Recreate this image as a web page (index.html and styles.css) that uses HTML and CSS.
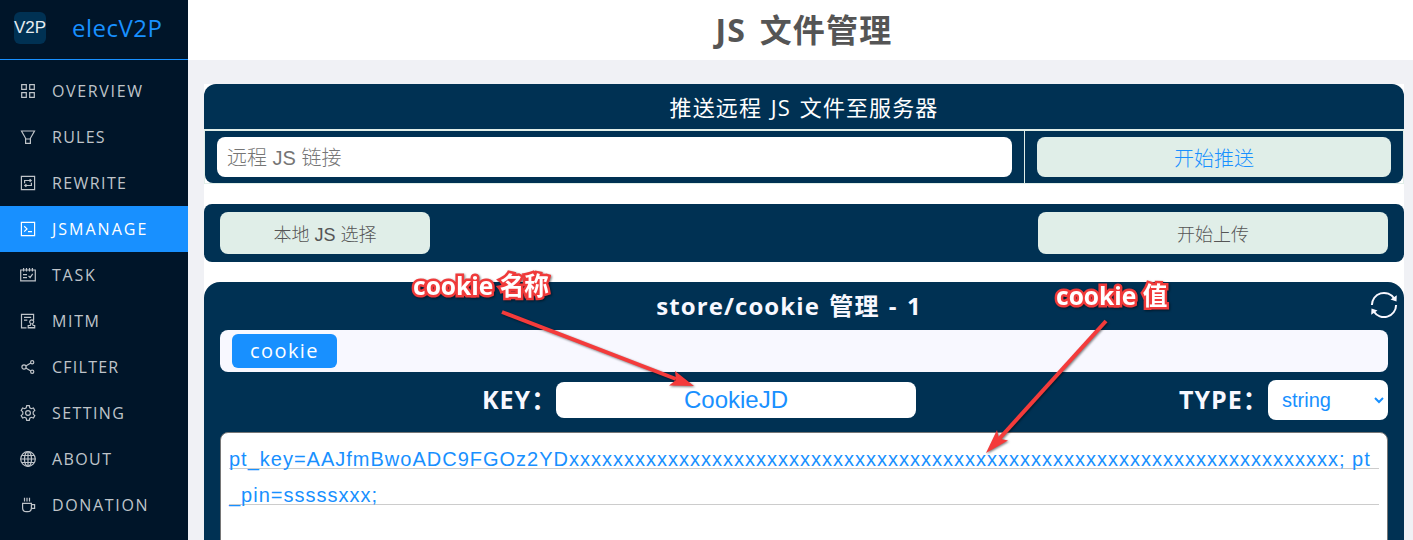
FILE: index.html
```html
<!DOCTYPE html>
<html lang="zh-CN">
<head>
<meta charset="utf-8">
<title>elecV2P</title>
<link rel="stylesheet" href="styles.css">
</head>
<body>
<div class="app">
  <aside class="sidebar">
    <div class="brand"><span class="logo"><span class="logo-text">V2P</span></span><span class="brand-name">elecV2P</span></div>
    <nav class="menu">
      <a class="item"><svg class="icon" viewBox="0 0 16 16"><path d="M1.7 1.7h4.6v4.6H1.7zM9.7 1.7h4.6v4.6H9.7zM1.7 9.7h4.6v4.6H1.7zM9.7 9.7h4.6v4.6H9.7z"/></svg><span class="t-overview">OVERVIEW</span></a>
      <a class="item"><svg class="icon" viewBox="0 0 16 16"><path d="M1.5 2h13L10.4 9.3v5H5.6v-5zM5.6 10h4.8"/></svg><span class="t-rules">RULES</span></a>
      <a class="item"><svg class="icon" viewBox="0 0 16 16"><path d="M1.4 1.4h13.2v13.2H1.4zM4.6 8.2V5.5h6.2M9.6 4.1l1.6 1.4-1.6 1.4M11.4 7.8v2.7H5.2M6.4 9.1l-1.6 1.4 1.6 1.4"/></svg><span class="t-rewrite">REWRITE</span></a>
      <a class="item active"><svg class="icon" viewBox="0 0 16 16"><path d="M1.4 1.4h13.2v13.2H1.4zM4.2 5.2 7 7.9l-2.8 2.7M8 10.6h4"/></svg><span class="t-jsmanage">JSMANAGE</span></a>
      <a class="item"><svg class="icon" viewBox="0 0 16 16"><path d="M.7 3h14.6v10.8H.7zM3.6 1v3.4M6.5 1v3.4M9.5 1v3.4M12.4 1v3.4M3 7.7h4M3 10.6h4M8.5 8.9l1.6 1.6 2.6-3.6"/></svg><span class="t-task">TASK</span></a>
      <a class="item"><svg class="icon" viewBox="0 0 16 16"><path d="M6.5 14.8h-5V1.3h12.1v6M4 4.3h7.2M4 7.2h3.3M8.2 15v-2.5h2.1l.7-1.8a2 2 0 1 1 1.4 0l.7 1.8h1.6V15zM8.2 14.7h6.5"/></svg><span class="t-mitm">MITM</span></a>
      <a class="item"><svg class="icon" viewBox="0 0 16 16"><circle cx="4" cy="8" r="2.1"/><circle cx="12.2" cy="3.2" r="1.6"/><circle cx="12.2" cy="12.8" r="1.6"/><path d="m5.8 6.9 5-2.9M5.8 9.1l5 2.9"/></svg><span class="t-cfilter">CFILTER</span></a>
      <a class="item"><svg class="icon" viewBox="0 0 16 16"><path d="m6.2 2.8.5-2.1h2.6l.5 2.1 1.5.9 2.1-.7 1.4 2.4-1.6 1.5v2.2l1.6 1.5-1.4 2.4-2.1-.7-1.5.9-.5 2.1H6.7l-.5-2.1-1.5-.9-2.1.7-1.4-2.4 1.6-1.5V6.9L1.2 5.4 2.6 3l2.1.7z"/><circle cx="8" cy="8" r="2.4"/></svg><span class="t-setting">SETTING</span></a>
      <a class="item"><svg class="icon" viewBox="0 0 16 16"><circle cx="8" cy="8" r="7.3"/><ellipse cx="8" cy="8" rx="3.5" ry="7.3"/><path d="M8 .7v14.6M.7 8h14.6M2 4.5h12M2 11.5h12"/></svg><span class="t-about">ABOUT</span></a>
      <a class="item"><svg class="icon" viewBox="0 0 16 16"><path d="M2.6 6.3h8.8v4.4c0 2.5-1.5 4-3.6 4H6.2c-2.1 0-3.6-1.5-3.6-4zM11.4 7.6h3.2v3.8h-3.4M4.5.7v3.7M7 .7v3.7M9.5.7v3.7"/></svg><span class="t-donation">DONATION</span></a>
    </nav>
  </aside>
  <div class="page">
    <header class="page-head"><h1 class="page-title">JS 文件管理</h1></header>
    <main class="content">
      <section class="push">
        <div class="push-title"><span class="push-title-text">推送远程 JS 文件至服务器</span></div>
        <div class="push-row">
          <div class="cell"><input class="url" placeholder="远程 JS 链接"></div>
          <div class="cell"><button class="btn btn-push">开始推送</button></div>
        </div>
      </section>
      <section class="upload">
        <button class="btn btn-file">本地 JS 选择</button>
        <button class="btn btn-upload">开始上传</button>
      </section>
      <section class="store">
        <div class="store-head">
          <h2 class="store-title">store/cookie 管理 - 1</h2>
          <svg class="refresh" viewBox="0 0 28 28"><path class="arc" d="M1.9 14A12.1 12.1 0 0 1 24.2 7.5M26.1 14A12.1 12.1 0 0 1 3.8 20.5"/><path class="tip" d="m26.8 4.2-.3 6.2-6-1.8zM1.2 23.8l.3-6.2 6 1.8z"/></svg>
        </div>
        <div class="tabs"><span class="tab"><span class="tab-text">cookie</span></span></div>
        <div class="fields">
          <span class="label label-key">KEY：</span>
          <input class="key" value="CookieJD">
          <span class="label label-type">TYPE：</span>
          <div class="type"><span>string</span><svg class="chevron" viewBox="0 0 10 8"><path d="m1 2 4 4 4-4"/></svg></div>
        </div>
        <div class="value"><span class="value-text">pt_key=AAJfmBwoADC9FGOz2YDxxxxxxxxxxxxxxxxxxxxxxxxxxxxxxxxxxxxxxxxxxxxxxxxxxxxxxxxxxxxxxxxxxxxxx; pt<br>_pin=sssssxxx;</span></div>
      </section>
    </main>
  </div>
  <svg class="arrows" viewBox="0 0 1413 540">
    <g><path class="shaft" d="M502 312 676 379"/><path class="head" d="m694 386-25-.5 7-5.5-1-9z"/></g>
    <g><path class="shaft" d="M1106 321 999 439"/><path class="head" d="m986 453 11-23 2 8.5 9 2z"/></g>
  </svg>
  <span class="note note-name">cookie 名称</span>
  <span class="note note-value">cookie 值</span>
</div>
</body>
</html>
```
FILE: styles.css
```css
* { box-sizing: border-box; }
body { margin: 0; font-family: "Open Sans", "Noto Sans CJK SC", sans-serif; overflow: hidden; }
.app { position: relative; display: flex; width: 1413px; height: 540px; overflow: hidden; }
.sidebar { width: 188px; flex: none; background: #001529; }
.brand { height: 60px; display: flex; align-items: center; padding: 0 0 4px 14px; border-bottom: 1px solid #1890ff; }
.logo { width: 32px; height: 32px; border-radius: 6px; background: #003153; color: #e8edf0; font: 17px/31px "Liberation Sans", sans-serif; display: flex; justify-content: center; }
.brand-name { margin-left: 26px; color: #1890ff; font-size: 24px; line-height: 32px; letter-spacing: .5px; }
.menu { padding-top: 8px; }
.item { display: flex; align-items: center; height: 46px; padding-left: 20px; gap: 16px; color: #bfc4c9; font-size: 16px; letter-spacing: 1.4px; }
.active { background: #1890ff; color: #fff; }
.t-overview, .t-mitm, .t-donation { letter-spacing: 1.65px; }
.t-rules, .t-cfilter { letter-spacing: 1.25px; }
.t-task { letter-spacing: 1.8px; }
.t-jsmanage { letter-spacing: 2px; }
.icon { width: 16px; height: 16px; fill: none; stroke: currentColor; stroke-width: 1.2; }
.page { flex: 1; background: #f0f1f5; }
.page-head { height: 60px; background: #fff; display: flex; align-items: center; justify-content: center; padding-left: 7px; }
.page-title { margin: 0; color: #555; font-size: 32px; line-height: 60px; letter-spacing: 1.2px; word-spacing: 4px; }
.content { margin: 24px 9px 0 16px; background: #fff; display: flex; flex-direction: column; gap: 20px; }
.push { height: 100px; }
.push-title { height: 45px; border-radius: 12px 12px 0 0; background: #003153; color: #fff; font-size: 22px; line-height: 46px; text-align: center; letter-spacing: 1.1px; word-spacing: 2px; }
.push-row { height: 55px; display: grid; grid-template-columns: 819px 378px; gap: 1px; background: linear-gradient(#e0eee8, #e0eee8) 819px 0 / 1px 52px no-repeat; border: 1px solid #e0eee8; border-top-width: 2px; }
.cell { background: #003153; padding: 6px 12px; display: flex; }
.cell:first-child { border-bottom-left-radius: 8px; }
.cell:last-child { border-bottom-right-radius: 8px; }
.url { flex: 1; height: 40px; border: 0; border-radius: 8px; padding: 2px 10px 0; font: 300 20px "Liberation Sans", "Noto Sans CJK SC", sans-serif; outline: 0; }
.url::placeholder { color: #757575; }
.btn { border: 0; padding: 0; border-radius: 8px; background: #e0eee8; color: #555; font: 300 18px "Liberation Sans", "Noto Sans CJK SC", sans-serif; }
.btn-push { flex: 1; height: 40px; color: #1890ff; font-size: 20px; }
.upload { height: 58px; border-radius: 8px; background: #003153; display: flex; justify-content: space-between; padding: 8px 16px; }
.btn-file { width: 210px; height: 42px; }
.btn-upload { width: 350px; height: 42px; }
.store { height: 300px; background: #003153; border-radius: 16px 16px 0 0; padding: 0 16px; }
.store-head { height: 48px; display: flex; align-items: center; justify-content: center; position: relative; padding-right: 30px; }
.store-title { margin: 0; color: #f8f8ff; font-size: 24px; line-height: 48px; letter-spacing: 1.1px; word-spacing: 2px; }
.refresh { position: absolute; right: -10px; top: 9px; width: 28px; height: 28px; }
.arc { fill: none; stroke: #f8f8ff; stroke-width: 2; }
.tip { fill: #f8f8ff; }
.tabs { height: 42px; border-radius: 8px; background: #f8f8ff; padding: 4px 12px; display: flex; }
.tab { width: 105px; height: 34px; border-radius: 6px; background: #1890ff; color: #fff; font-size: 20px; line-height: 34px; letter-spacing: 1.4px; text-align: center; }
.fields { height: 40px; margin-top: 8px; display: flex; align-items: center; }
.label { color: #f8f8ff; font-weight: 700; font-size: 25px; line-height: 36px; padding-bottom: 2px; letter-spacing: 1px; white-space: nowrap; flex: none; }
.label-key { width: 74px; margin-left: 262px; }
.key { width: 360px; height: 36px; border: 0; border-radius: 8px; padding: 0; text-align: center; color: #1890ff; font: 24px "Liberation Sans", sans-serif; }
.label-type { width: 89px; margin-left: 263px; }
.type { width: 120px; height: 40px; border-radius: 8px; background: #fff; color: #1890ff; font: 20px "Liberation Sans", sans-serif; display: flex; align-items: center; justify-content: space-between; padding: 0 4px 0 14px; }
.chevron { width: 10px; height: 8px; fill: none; stroke: #1890ff; stroke-width: 2; }
.value { margin-top: 12px; height: 200px; border: 1px solid #767676; border-radius: 8px; padding: 8px; color: #1890ff; font: 20px/36px "Liberation Sans", sans-serif; letter-spacing: 1px; white-space: nowrap; background: repeating-linear-gradient(transparent 0 35px, #ccc 35px 36px) padding-box content-box, #fff; }
.arrows { position: absolute; left: 0; top: 0; width: 1413px; height: 540px; filter: drop-shadow(1px 1px 1px rgba(0, 0, 0, .5)); }
.shaft { fill: none; stroke: #f43b3b; stroke-width: 4; }
.head { fill: #f43b3b; }
.note { position: absolute; color: #fff; font-size: 24.6px; font-weight: 700; line-height: 30px; white-space: nowrap; -webkit-text-stroke: 5px #f03a3a; paint-order: stroke fill; filter: drop-shadow(1px 1px 1px rgba(0, 0, 0, .5)); }
.note-name { left: 413px; top: 271px; }
.note-value { left: 1056px; top: 281px; }
```
